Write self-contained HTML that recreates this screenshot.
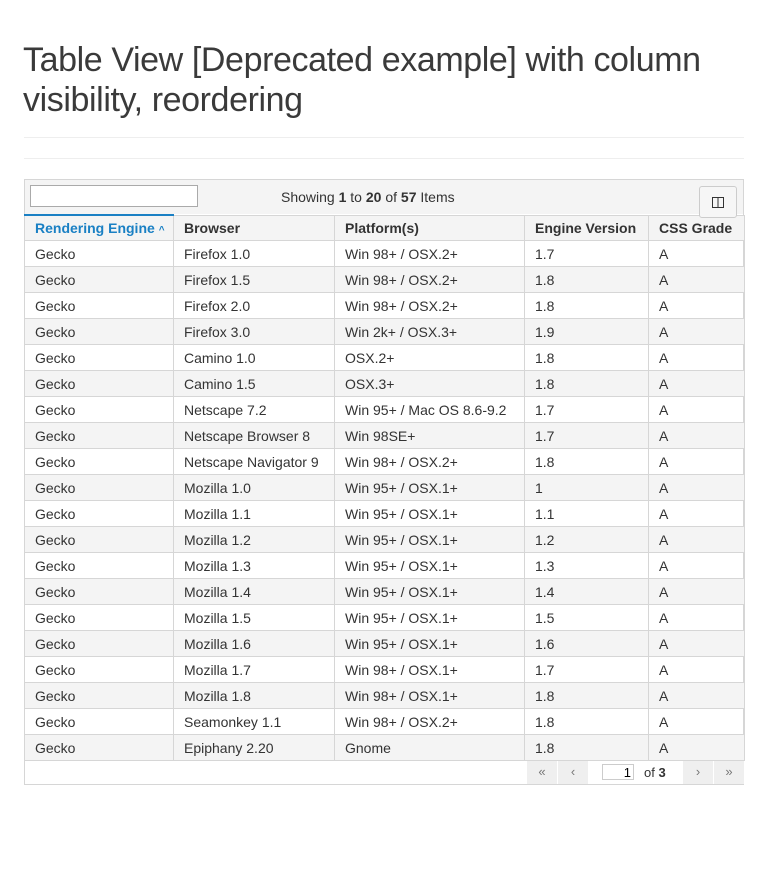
<!DOCTYPE html>
<html><head><style>
body{margin:0;background:#fff;font-family:"Liberation Sans",sans-serif;color:#333;}
h1{position:absolute;left:23px;top:40px;margin:0;font-weight:300;font-size:34px;line-height:40px;color:#3a3a3a;width:720px;letter-spacing:-0.4px}
.hr{position:absolute;left:24px;width:720px;height:1px;background:#eee}
.box{position:absolute;left:24px;top:179px;width:718px;border:1px solid #d6d6d6;background:#fff}
.tb{height:34px;background:#f4f4f4;position:relative;font-size:14px}
.tb input{position:absolute;left:5px;top:5px;width:166px;height:20px;border:1px solid #aaa;padding:0}
.tb .s{position:absolute;left:256px;top:9px}
.tb .btn{position:absolute;left:674px;top:6px;width:36px;height:30px;border:1px solid #ccc;border-radius:3px;background:#f6f6f6;z-index:2}
table{border-collapse:collapse;width:720px;margin-left:-1px;font-size:14px;table-layout:fixed}
th{text-align:left;font-weight:bold;height:24px;padding:0 0 0 10px;border:1px solid #d6d6d6;background:#f4f4f4;color:#333;font-size:14px}
th.a{color:#1a80c4;border-top:2px solid #1a80c4}
td{height:25px;padding:0 0 0 10px;border:1px solid #d6d6d6}
tr:nth-child(odd) td{background:#f4f4f4}
.ft{height:23px;position:relative;font-size:13px}
.pb{position:absolute;top:0;height:23px;width:30px;background:#efefef;color:#777;text-align:center;line-height:22px}
</style></head><body>
<h1>Table View [Deprecated example] with column visibility, reordering</h1>
<div class="hr" style="top:137px"></div>
<div class="hr" style="top:158px"></div>
<div class="box">
<div class="tb"><input><span class="s">Showing <b>1</b> to <b>20</b> of <b>57</b> Items</span>
<div class="btn"><svg width="36" height="30"><rect x="12.5" y="10.5" width="11" height="10" fill="none" stroke="#333"/><line x1="18" y1="10" x2="18" y2="21" stroke="#333"/></svg></div></div>
<table>
<colgroup><col style="width:149px"><col style="width:161px"><col style="width:190px"><col style="width:124px"><col style="width:96px"></colgroup>
<tr><th class="a">Rendering Engine <span style="font-size:10px">^</span></th><th>Browser</th><th>Platform(s)</th><th>Engine Version</th><th>CSS Grade</th></tr>
<tr><td>Gecko</td><td>Firefox 1.0</td><td>Win 98+ / OSX.2+</td><td>1.7</td><td>A</td></tr>
<tr><td>Gecko</td><td>Firefox 1.5</td><td>Win 98+ / OSX.2+</td><td>1.8</td><td>A</td></tr>
<tr><td>Gecko</td><td>Firefox 2.0</td><td>Win 98+ / OSX.2+</td><td>1.8</td><td>A</td></tr>
<tr><td>Gecko</td><td>Firefox 3.0</td><td>Win 2k+ / OSX.3+</td><td>1.9</td><td>A</td></tr>
<tr><td>Gecko</td><td>Camino 1.0</td><td>OSX.2+</td><td>1.8</td><td>A</td></tr>
<tr><td>Gecko</td><td>Camino 1.5</td><td>OSX.3+</td><td>1.8</td><td>A</td></tr>
<tr><td>Gecko</td><td>Netscape 7.2</td><td>Win 95+ / Mac OS 8.6-9.2</td><td>1.7</td><td>A</td></tr>
<tr><td>Gecko</td><td>Netscape Browser 8</td><td>Win 98SE+</td><td>1.7</td><td>A</td></tr>
<tr><td>Gecko</td><td>Netscape Navigator 9</td><td>Win 98+ / OSX.2+</td><td>1.8</td><td>A</td></tr>
<tr><td>Gecko</td><td>Mozilla 1.0</td><td>Win 95+ / OSX.1+</td><td>1</td><td>A</td></tr>
<tr><td>Gecko</td><td>Mozilla 1.1</td><td>Win 95+ / OSX.1+</td><td>1.1</td><td>A</td></tr>
<tr><td>Gecko</td><td>Mozilla 1.2</td><td>Win 95+ / OSX.1+</td><td>1.2</td><td>A</td></tr>
<tr><td>Gecko</td><td>Mozilla 1.3</td><td>Win 95+ / OSX.1+</td><td>1.3</td><td>A</td></tr>
<tr><td>Gecko</td><td>Mozilla 1.4</td><td>Win 95+ / OSX.1+</td><td>1.4</td><td>A</td></tr>
<tr><td>Gecko</td><td>Mozilla 1.5</td><td>Win 95+ / OSX.1+</td><td>1.5</td><td>A</td></tr>
<tr><td>Gecko</td><td>Mozilla 1.6</td><td>Win 95+ / OSX.1+</td><td>1.6</td><td>A</td></tr>
<tr><td>Gecko</td><td>Mozilla 1.7</td><td>Win 98+ / OSX.1+</td><td>1.7</td><td>A</td></tr>
<tr><td>Gecko</td><td>Mozilla 1.8</td><td>Win 98+ / OSX.1+</td><td>1.8</td><td>A</td></tr>
<tr><td>Gecko</td><td>Seamonkey 1.1</td><td>Win 98+ / OSX.2+</td><td>1.8</td><td>A</td></tr>
<tr><td>Gecko</td><td>Epiphany 2.20</td><td>Gnome</td><td>1.8</td><td>A</td></tr>
</table>
<div class="ft">
<div class="pb" style="left:502px">«</div><div class="pb" style="left:533px">‹</div>
<input style="position:absolute;left:577px;top:3px;width:26px;height:14px;border:1px solid #ccc;text-align:right;font-size:13px;padding:0 2px" value="1">
<span style="position:absolute;left:619px;top:4px">of <b>3</b></span>
<div class="pb" style="left:658px">›</div><div class="pb" style="left:689px">»</div>
</div>
</div>
</body></html>
